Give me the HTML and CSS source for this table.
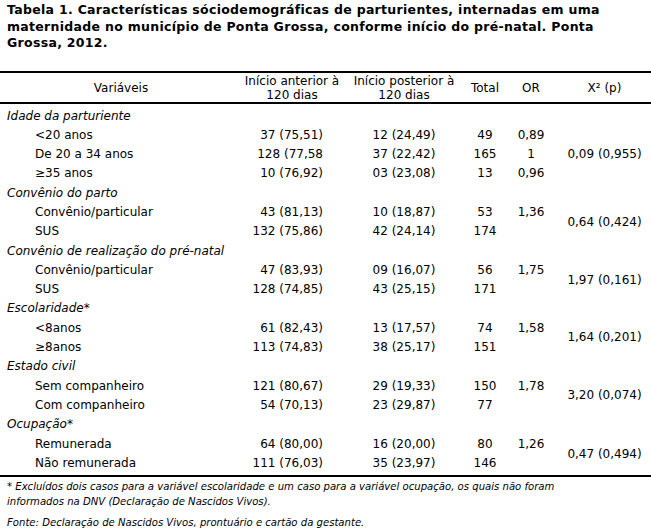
FILE: index.html
```html
<!DOCTYPE html>
<html lang="pt">
<head>
<meta charset="utf-8">
<title>Tabela 1</title>
<link rel="stylesheet" href="styles.css">
</head>
<body>
<div class="title">Tabela 1. Características sóciodemográficas de parturientes, internadas em uma maternidade no município de Ponta Grossa, conforme início do pré-natal. Ponta<br>Grossa, 2012.</div>
<table class="tbl">
<colgroup>
<col class="w-var"><col class="w-a"><col class="w-b"><col class="w-tot"><col class="w-or"><col class="w-x2">
</colgroup>
<thead>
<tr>
<th>Variáveis</th>
<th>Início anterior à<br>120 dias</th>
<th>Início posterior à<br>120 dias</th>
<th>Total</th>
<th>OR</th>
<th>X² (p)</th>
</tr>
</thead>
<tbody>
<tr class="grp first"><td colspan="6">Idade da parturiente</td></tr>
<tr><td class="sub">&lt;20 anos</td><td class="na">37 (75,51)</td><td class="nb">12 (24,49)</td><td class="c">49</td><td class="c">0,89</td><td class="c"></td></tr>
<tr><td class="sub">De 20 a 34 anos</td><td class="na">128 (77,58</td><td class="nb">37 (22,42)</td><td class="c">165</td><td class="c">1</td><td class="c">0,09 (0,955)</td></tr>
<tr><td class="sub">≥35 anos</td><td class="na">10 (76,92)</td><td class="nb">03 (23,08)</td><td class="c">13</td><td class="c">0,96</td><td class="c"></td></tr>

<tr class="grp"><td colspan="6">Convênio do parto</td></tr>
<tr><td class="sub">Convênio/particular</td><td class="na">43 (81,13)</td><td class="nb">10 (18,87)</td><td class="c">53</td><td class="c">1,36</td><td class="c" rowspan="2">0,64 (0,424)</td></tr>
<tr><td class="sub">SUS</td><td class="na">132 (75,86)</td><td class="nb">42 (24,14)</td><td class="c">174</td><td class="c"></td></tr>

<tr class="grp"><td colspan="6">Convênio de realização do pré-natal</td></tr>
<tr><td class="sub">Convênio/particular</td><td class="na">47 (83,93)</td><td class="nb">09 (16,07)</td><td class="c">56</td><td class="c">1,75</td><td class="c" rowspan="2">1,97 (0,161)</td></tr>
<tr><td class="sub">SUS</td><td class="na">128 (74,85)</td><td class="nb">43 (25,15)</td><td class="c">171</td><td class="c"></td></tr>

<tr class="grp"><td colspan="6">Escolaridade*</td></tr>
<tr><td class="sub">&lt;8anos</td><td class="na">61 (82,43)</td><td class="nb">13 (17,57)</td><td class="c">74</td><td class="c">1,58</td><td class="c" rowspan="2">1,64 (0,201)</td></tr>
<tr><td class="sub">≥8anos</td><td class="na">113 (74,83)</td><td class="nb">38 (25,17)</td><td class="c">151</td><td class="c"></td></tr>

<tr class="grp"><td colspan="6">Estado civil</td></tr>
<tr><td class="sub">Sem companheiro</td><td class="na">121 (80,67)</td><td class="nb">29 (19,33)</td><td class="c">150</td><td class="c">1,78</td><td class="c" rowspan="2">3,20 (0,074)</td></tr>
<tr><td class="sub">Com companheiro</td><td class="na">54 (70,13)</td><td class="nb">23 (29,87)</td><td class="c">77</td><td class="c"></td></tr>

<tr class="grp"><td colspan="6">Ocupação*</td></tr>
<tr><td class="sub">Remunerada</td><td class="na">64 (80,00)</td><td class="nb">16 (20,00)</td><td class="c">80</td><td class="c">1,26</td><td class="c" rowspan="2">0,47 (0,494)</td></tr>
<tr class="last"><td class="sub">Não remunerada</td><td class="na">111 (76,03)</td><td class="nb">35 (23,97)</td><td class="c">146</td><td class="c"></td></tr>
</tbody>
</table>
<p class="note">* Excluídos dois casos para a variável escolaridade e um caso para a variável ocupação, os quais não foram<br>informados na DNV (Declaração de Nascidos Vivos).</p>
<p class="note src">Fonte: Declaração de Nascidos Vivos, prontuário e cartão da gestante.</p>
</body>
</html>
```
FILE: styles.css
```css
html, body {
  margin: 0;
  padding: 0;
  background: #fff;
  color: #000;
  font-family: "DejaVu Sans", Verdana, sans-serif;
}

.title {
  font-weight: bold;
  font-size: 12.5px;
  line-height: 16.5px;
  letter-spacing: 0.3px;
  padding: 2px 4px 0 7px;
  margin-bottom: 19px;
}

.tbl {
  width: 651px;
  border-collapse: collapse;
  table-layout: fixed;
  font-size: 12px;
}

.w-var { width: 242px; }
.w-a { width: 100px; }
.w-b { width: 124px; }
.w-tot { width: 38px; }
.w-or { width: 54px; }
.w-x2 { width: 93px; }

.tbl thead tr {
  border-top: 2px solid #000;
  border-bottom: 2px solid #000;
}

.tbl th {
  font-weight: normal;
  line-height: 14px;
  padding: 1px 0 0;
  height: 28px;
  text-align: center;
  vertical-align: middle;
  white-space: nowrap;
}

.tbl td {
  padding: 0;
  line-height: 19.3px;
  height: 19.3px;
  white-space: nowrap;
  vertical-align: middle;
}

.tbl tr.first td {
  padding-top: 3px;
}

.tbl tr.last td {
  padding-bottom: 2px;
}

.tbl tbody {
  border-bottom: 2px solid #000;
}

.grp td {
  font-style: italic;
  padding-left: 7px;
}

.tbl td.sub {
  padding-left: 35px;
}

.tbl td.na {
  text-align: right;
  padding-right: 19px;
}

.tbl td.nb {
  text-align: center;
}

.tbl td.c {
  text-align: center;
}

.note {
  margin: 0;
  padding: 2px 7px 0;
  font-size: 10.1px;
  font-style: italic;
  line-height: 15px;
}

.note.src {
  padding-top: 6px;
}
```
